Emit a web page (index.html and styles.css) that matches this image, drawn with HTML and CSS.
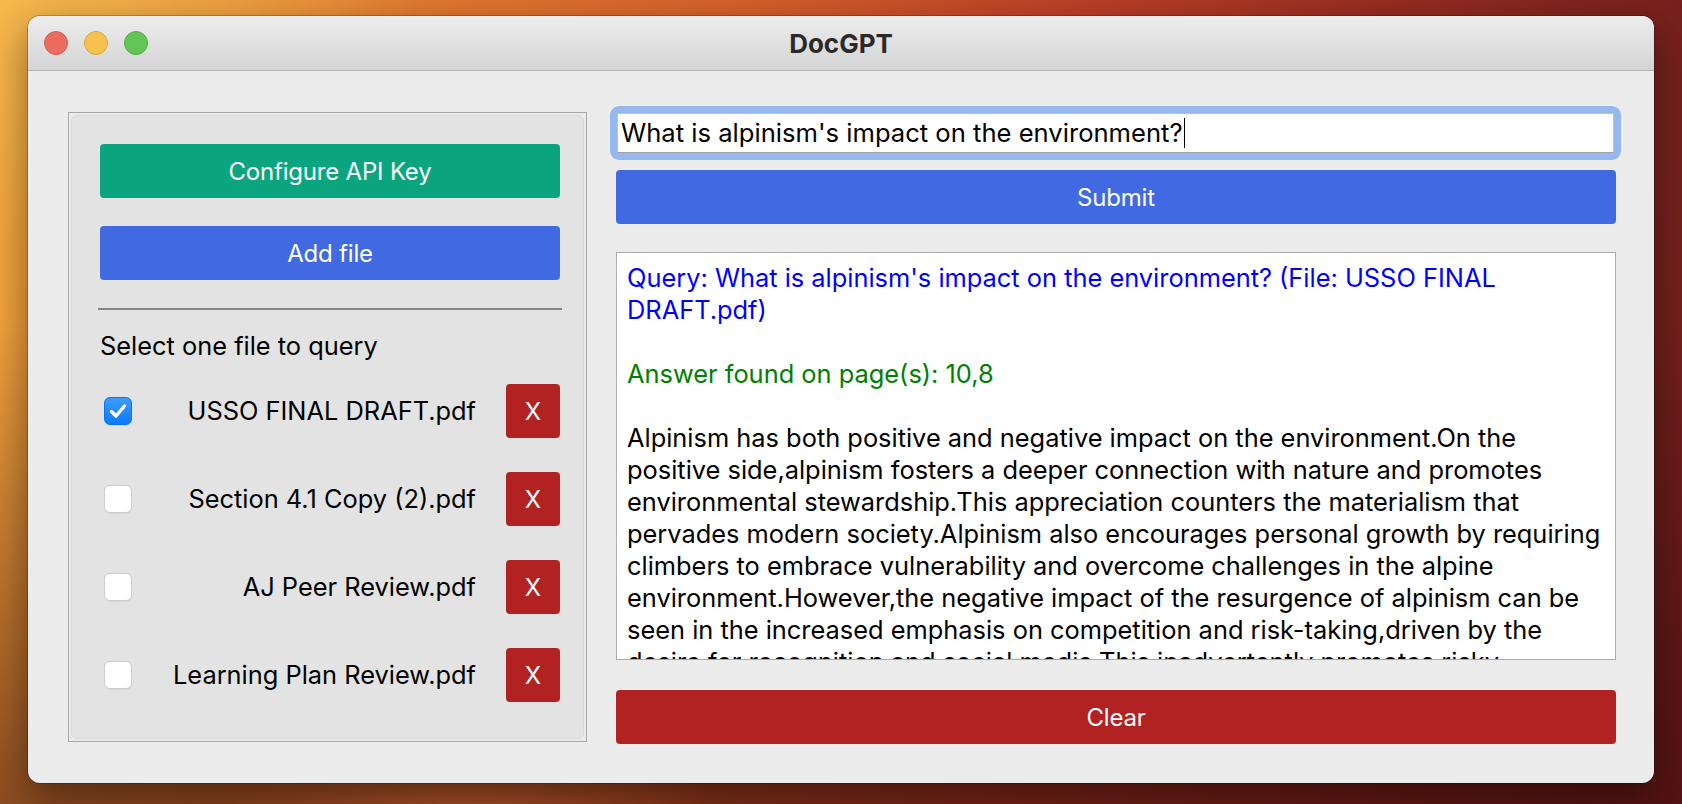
FILE: index.html
```html
<!DOCTYPE html>
<html lang="en">
<head>
<meta charset="utf-8">
<title>DocGPT</title>
<link rel="stylesheet" href="styles.css">
</head>
<body>
<div class="desktop">
  <div class="window">
    <header class="titlebar">
      <div class="lights">
        <span class="light red"></span>
        <span class="light yellow"></span>
        <span class="light green"></span>
      </div>
      <div class="title">DocGPT</div>
      <div></div>
    </header>
    <div class="content">
      <aside class="panel">
        <div class="panel-inner">
          <button class="btn btn-green">Configure API Key</button>
          <button class="btn btn-blue add-file">Add file</button>
          <div class="sep"></div>
          <div class="select-label">Select one file to query</div>
          <ul class="files">
            <li class="file">
              <span class="cb checked"><svg viewBox="0 0 28 28" width="28" height="28"><path d="M7.5 14.5 L12 19 L20.5 9" fill="none" stroke="#fff" stroke-width="3.4" stroke-linecap="round" stroke-linejoin="round"/></svg></span>
              <span class="fname">USSO FINAL DRAFT.pdf</span>
              <button class="xbtn">X</button>
            </li>
            <li class="file">
              <span class="cb"></span>
              <span class="fname">Section 4.1 Copy (2).pdf</span>
              <button class="xbtn">X</button>
            </li>
            <li class="file">
              <span class="cb"></span>
              <span class="fname">AJ Peer Review.pdf</span>
              <button class="xbtn">X</button>
            </li>
            <li class="file">
              <span class="cb"></span>
              <span class="fname">Learning Plan Review.pdf</span>
              <button class="xbtn">X</button>
            </li>
          </ul>
        </div>
      </aside>
      <main class="main">
        <div class="ring">
          <div class="query-input">What is alpinism's impact on the environment?<span class="caret"></span></div>
        </div>
        <button class="btn btn-blue submit">Submit</button>
        <div class="output">
          <p class="q">Query: What is alpinism's impact on the environment? (File: USSO FINAL<br>DRAFT.pdf)</p>
          <p class="a">Answer found on page(s): 10,8</p>
          <p class="body-text">Alpinism has both positive and negative impact on the environment.On the<br>positive side,alpinism fosters a deeper connection with nature and promotes<br>environmental stewardship.This appreciation counters the materialism that<br>pervades modern society.Alpinism also encourages personal growth by requiring<br>climbers to embrace vulnerability and overcome challenges in the alpine<br>environment.However,the negative impact of the resurgence of alpinism can be<br>seen in the increased emphasis on competition and risk-taking,driven by the<br>desire for recognition and social media.This inadvertently promotes risky</p>
        </div>
        <button class="btn btn-red clear">Clear</button>
      </main>
    </div>
  </div>
</div>
</body>
</html>
```

FILE: styles.css
```css
* { box-sizing: border-box; }
html, body { margin: 0; padding: 0; }
body {
  width: 1682px;
  height: 804px;
  overflow: hidden;
  font-family: Inter, "Noto Sans", sans-serif;
  background:
    radial-gradient(ellipse 420px 260px at 0% 0%, #f7b84d 0%, rgba(247,184,77,0) 100%),
    radial-gradient(ellipse 260px 100px at 470px 830px, rgba(190,95,45,0.75) 0%, rgba(190,95,45,0) 100%),
    linear-gradient(180deg, rgba(0,0,0,0) 40%, rgba(60,10,10,0.55) 100%),
    linear-gradient(95deg, #f2a53e 0%, #e47d31 22%, #d8612b 42%, #bd3f28 62%, #962c21 80%, #6e1e1c 100%);
}
.desktop { padding: 16px 0 0 28px; }
.window {
  width: 1626px;
  height: 767px;
  border-radius: 12px;
  background: #ececec;
  overflow: hidden;
  box-shadow: 0 0 0 1px rgba(0,0,0,0.22), 0 14px 40px rgba(0,0,0,0.45);
  display: flex;
  flex-direction: column;
}
.titlebar {
  flex: none;
  height: 55px;
  background: linear-gradient(#ededed, #d4d4d4);
  border-bottom: 1px solid #b5b5b5;
  display: grid;
  grid-template-columns: 1fr auto 1fr;
  align-items: center;
}
.lights { display: flex; gap: 16px; padding-left: 16px; }
.light { width: 24px; height: 24px; border-radius: 50%; }
.light.red { background: #ee6b60; border: 1px solid #d25a4f; }
.light.yellow { background: #f6c14f; border: 1px solid #d9a440; }
.light.green { background: #62c655; border: 1px solid #52a945; }
.title { font-size: 26px; font-weight: 700; color: #2a2a2a; }

.content {
  flex: 1;
  display: flex;
  align-items: flex-start;
  gap: 23px;
  padding: 35px 0 0 40px;
}
.panel {
  flex: none;
  width: 519px;
  height: 630px;
  margin-top: 6px;
  border: 1px solid #a9a9a9;
  padding: 2px;
  background: #ebebeb;
}
.panel-inner {
  height: 100%;
  border: 1px solid #d9d9d9;
  border-radius: 6px;
  background: #e3e3e3;
  padding: 28px 23px 0 28px;
  display: flex;
  flex-direction: column;
}
.btn {
  flex: none;
  display: flex;
  align-items: center;
  justify-content: center;
  width: 100%;
  height: 54px;
  padding: 0;
  border: 0;
  border-radius: 4px;
  color: #fff;
  font-family: inherit;
  font-size: 24px;
  letter-spacing: -0.2px;
}
.btn-green { background: #0aa57f; }
.btn-blue { background: #4169e1; }
.btn-red { background: #b22222; }
.add-file { margin-top: 28px; }
.sep {
  height: 2px;
  margin: 28px -2px 0 -2px;
  background: #858585;
}
.select-label {
  margin-top: 20px;
  font-size: 25.4px;
  line-height: 32px;
  color: #000;
}
.files {
  list-style: none;
  margin: 22px 0 0;
  padding: 0;
  display: flex;
  flex-direction: column;
  gap: 34px;
}
.file {
  display: flex;
  align-items: center;
  height: 54px;
}
.cb {
  flex: none;
  width: 28px;
  height: 28px;
  margin-left: 4px;
  border-radius: 6px;
  background: #fff;
  border: 1px solid #cdcdcd;
  box-shadow: 0 1px 1px rgba(0,0,0,0.06);
}
.cb.checked {
  background: linear-gradient(#3d9cff, #0b7bff);
  border-color: #0b72ea;
  display: flex;
  align-items: center;
  justify-content: center;
}
.cb.checked svg { display: block; margin: -1px; }
.fname {
  flex: 1;
  text-align: right;
  margin-right: 30px;
  font-size: 25.4px;
  line-height: 32px;
  color: #000;
  white-space: nowrap;
}
.xbtn {
  flex: none;
  width: 54px;
  height: 54px;
  border: 0;
  border-radius: 4px;
  padding: 0;
  background: #b22222;
  color: #fff;
  font-family: inherit;
  font-size: 24px;
}

.main {
  flex: none;
  width: 1011px;
  display: flex;
  flex-direction: column;
}
.ring {
  padding: 7px;
  border-radius: 9px;
  background: #95b9ef;
}
.query-input {
  height: 40px;
  background: #fff;
  border: 1px solid #c4c4c4;
  border-bottom-color: #a3a3a3;
  padding: 0 3px;
  font-size: 25.6px;
  line-height: 38px;
  color: #000;
  white-space: nowrap;
  display: flex;
  align-items: center;
}
.caret {
  display: inline-block;
  width: 1.5px;
  height: 30px;
  margin-left: 1px;
  background: #000;
}
.submit { margin: 10px 5px 0 6px; width: auto; }
.output {
  margin: 28px 5px 0 6px;
  height: 408px;
  border: 1px solid #ababab;
  background: #fff;
  overflow: hidden;
  padding: 9px 10px 0;
  font-size: 25.4px;
  line-height: 32px;
  color: #000;
  white-space: nowrap;
}
.output p { margin: 0 0 32px; }
.output .q { color: #0000ff; }
.output .a { color: #008000; }
.clear { margin: 30px 5px 0 6px; width: auto; }
```
